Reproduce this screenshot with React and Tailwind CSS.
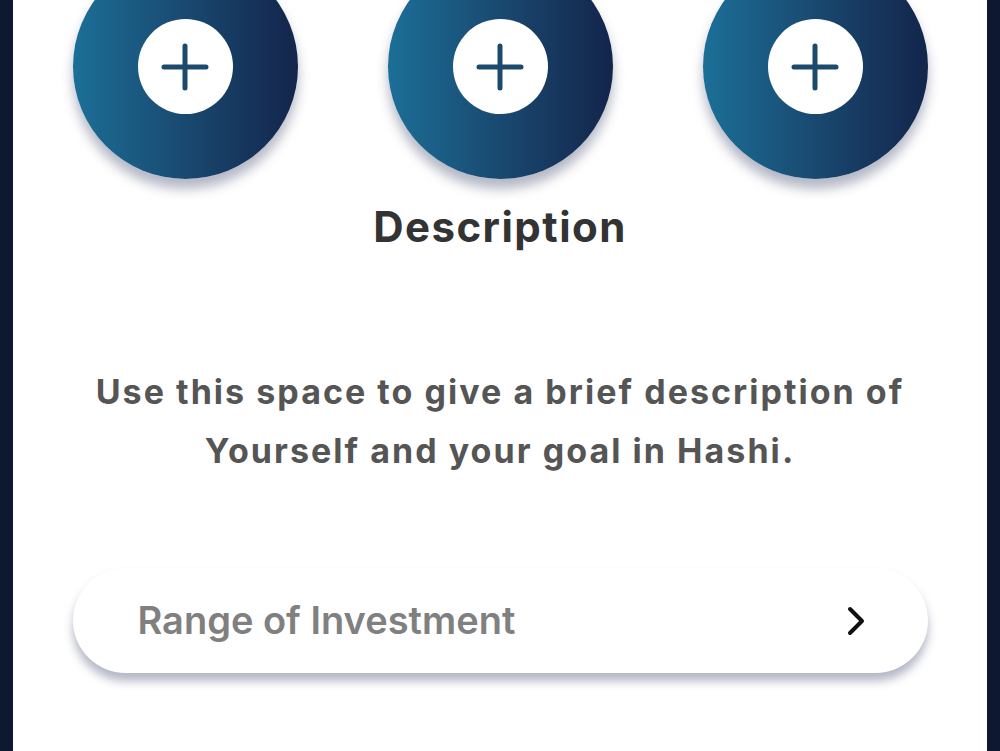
const PlusCircle = () => {
  return (
    <div className="w-[225px] h-[225px] rounded-full bg-gradient-to-r from-[#1b6f97] to-[#13254b] shadow-[0_10px_12px_rgba(40,50,90,0.35)] flex items-center justify-center shrink-0">
      <div className="w-[95px] h-[95px] rounded-full bg-white flex items-center justify-center">
        <svg width="48" height="48" viewBox="0 0 48 48" fill="none">
          <path d="M24 3v42M3 24h42" stroke="#1c4a6c" strokeWidth="5" strokeLinecap="round" />
        </svg>
      </div>
    </div>
  );
};

const App = () => {
  return (
    <div className="w-[1000px] h-[751px] bg-[#0e1830] px-[13px] overflow-hidden" style={{ fontFamily: "Inter, 'Noto Sans', sans-serif" }}>
      <div className="h-full bg-white flex flex-col items-center overflow-hidden">
        {/* Photo slots */}
        <div className="flex gap-[90px] mt-[-46px]">
          <PlusCircle />
          <PlusCircle />
          <PlusCircle />
        </div>

        {/* Heading */}
        <h2 className="mt-[24px] text-[42px] leading-[48px] font-bold text-[#333333] tracking-[0.035em]">Description</h2>

        {/* Text */}
        <p className="mt-[111px] text-[34px] leading-[59px] font-bold text-[#555555] text-center tracking-[0.06em] whitespace-nowrap">
          Use this space to give a brief description of
          <br />
          Yourself and your goal in Hashi.
        </p>

        {/* Range select */}
        <div className="mt-[88px] w-[855px] h-[105px] rounded-full bg-white shadow-[0_8px_10px_rgba(40,50,90,0.35)] flex items-center justify-between pl-[65px] pr-[62px]">
          <span className="text-[38px] font-semibold text-[#808080]">Range of Investment</span>
          <svg width="20" height="30" viewBox="0 0 20 30" fill="none">
            <path d="M4 3l12 12-12 12" stroke="#111" strokeWidth="4" strokeLinecap="round" strokeLinejoin="round" />
          </svg>
        </div>
      </div>
    </div>
  );
};

export default App;
